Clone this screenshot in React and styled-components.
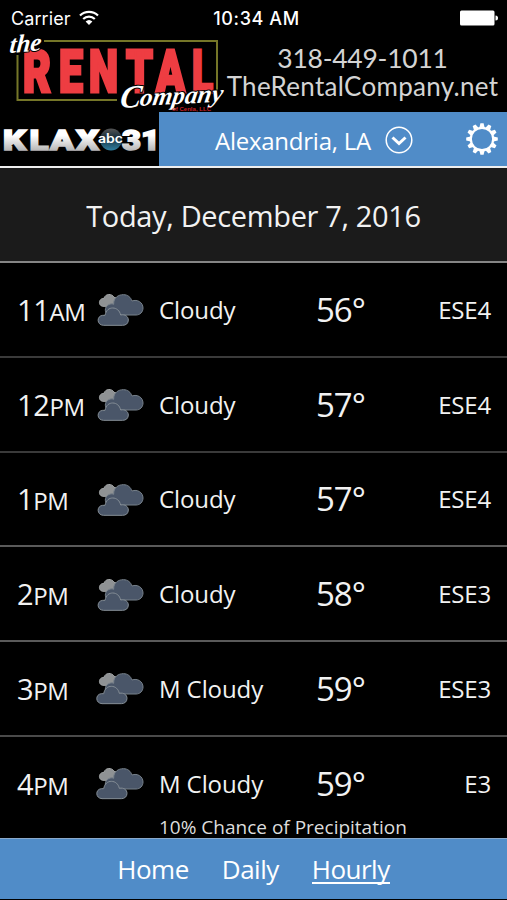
import styled, { createGlobalStyle } from "styled-components";

const hours = [
  { hour: "11", half: "AM", sky: "Cloudy", temp: 56, wind: "ESE4", line: "#3a3a3a" },
  { hour: "12", half: "PM", sky: "Cloudy", temp: 57, wind: "ESE4", line: "#3a3a3a" },
  { hour: "1", half: "PM", sky: "Cloudy", temp: 57, wind: "ESE4", line: "#5a5a5a" },
  { hour: "2", half: "PM", sky: "Cloudy", temp: 58, wind: "ESE3", line: "#5a5a5a" },
  { hour: "3", half: "PM", sky: "M Cloudy", temp: 59, wind: "ESE3", line: "#4a4a4a" },
  { hour: "4", half: "PM", sky: "M Cloudy", temp: 59, wind: "E3", rain: "10% Chance of Precipitation" },
];

const GlobalStyle = createGlobalStyle`
  * {
    box-sizing: border-box;
  }

  body {
    margin: 0;
    background: #000;
  }
`;

const Screen = styled.div`
  display: flex;
  flex-direction: column;
  width: 507px;
  height: 900px;
  overflow: hidden;
  background: #000;
  color: #f2f2f2;
  font-family: "Open Sans", "Noto Sans", sans-serif;
`;

const StatusBar = styled.div`
  display: grid;
  grid-template-columns: 1fr auto 1fr;
  align-items: center;
  flex: none;
  height: 36px;
  padding: 0 9px 0 11px;
  color: #fff;
  font-family: Inter, sans-serif;
  font-size: 18px;
`;

const Carrier = styled.div`
  display: flex;
  align-items: center;
  gap: 8px;
  letter-spacing: 0.1px;
`;

const Clock = styled.div`
  padding-left: 4px;
  font-size: 18px;
  font-weight: 500;
  letter-spacing: 0.6px;
`;

const BatteryIcon = styled.svg`
  justify-self: end;
`;

const Banner = styled.div`
  display: flex;
  flex: none;
  height: 76px;
`;

const Logo = styled.svg`
  flex: none;
  overflow: visible;
`;

const BannerText = styled.div`
  display: flex;
  flex-direction: column;
  align-items: center;
  width: 271px;
  padding-top: 8px;
  color: #d4d4d4;
  font-family: Lato, sans-serif;
  line-height: 28px;
  white-space: nowrap;
`;

const Phone = styled.span`
  font-size: 26.5px;
  letter-spacing: -0.25px;
`;

const Site = styled.span`
  font-size: 26px;
  letter-spacing: 0.3px;
`;

const Header = styled.header`
  display: flex;
  flex: none;
  height: 56px;
  border-bottom: 2px solid #eee;
`;

const Location = styled.div`
  display: flex;
  flex: 1;
  align-items: center;
  background: #508cc8;
  padding: 2px 9px 0 56px;
  color: #fff;
  font-size: 24px;
  letter-spacing: -0.25px;
`;

const Arrow = styled.svg`
  margin-left: 14px;
`;

const Gear = styled.svg`
  margin-left: auto;
  margin-bottom: 2px;
`;

const DateBar = styled.div`
  display: flex;
  align-items: center;
  justify-content: center;
  flex: none;
  height: 95px;
  padding-top: 1px;
  border-bottom: 2px solid #858585;
  background: #1b1b1b;
  font-size: 29px;
  letter-spacing: -0.35px;
`;

const List = styled.div`
  flex: none;
  height: 574.5px;
  overflow: hidden;
`;

const Row = styled.div`
  display: grid;
  grid-template-columns: 79px 63px 157px 1fr auto;
  align-items: center;
  height: 94.75px;
  padding: 0 16px 0 17px;
  border-bottom: 2px solid ${({ $line }) => $line || "transparent"};
`;

const Time = styled.div`
  font-size: 29px;
  letter-spacing: -0.4px;

  small {
    font-size: 24px;
  }
`;

const Sky = styled.div`
  font-size: 24px;
  letter-spacing: -0.1px;
`;

const Temp = styled.div`
  font-size: 33px;
  letter-spacing: -1px;
`;

const Wind = styled.div`
  font-size: 24px;
  letter-spacing: -0.2px;
`;

const Rain = styled.div`
  grid-column: 3 / -1;
  align-self: start;
  font-size: 19px;
  line-height: 24px;
  color: #ddd;
`;

const RainRow = styled(Row)`
  grid-template-rows: 93px 30px;
  height: 124px;

  ${Rain} {
    margin-top: -15px;
  }
`;

const Footer = styled.nav`
  display: flex;
  justify-content: center;
  flex: none;
  gap: 33px;
  height: 61px;
  padding-top: 12px;
  border-top: 1px solid #8aa9cb;
  background: #508cc8;
  color: #fff;
  font-size: 26px;
  letter-spacing: -0.5px;
  line-height: 37px;
`;

const Tab = styled.span`
  height: 33px;
  border-bottom: 2px solid ${({ $active }) => ($active ? "#fff" : "transparent")};
`;

const CloudIcon = ({ wide }) => (
  <svg width="48" height="34" viewBox="18 38 144 102" strokeWidth="3">
    <path
      d="M38 81C24 79 25 57 42 57C46 42 66 42 72 54C86 54 88 74 76 81z"
      fill="#8f9294"
      stroke="#a3a6a7"
    />
    <path
      d="M60 107C42 105 42 82 56 76C62 73 66 73 71 75C70 54 86 46 100 46C114 46 122 54 126 65C142 59 159 69 159 86C159 98 150 107 138 107z"
      fill="#4a5669"
      stroke="#77818b"
    />
    <path
      transform={wide ? "translate(-4 -2)" : undefined}
      d="M40 138C20 137 19 110 38 108H45C48 92 58 86 68 86C80 86 89 94 92 107C106 104 115 112 115 122C115 132 108 138 98 138z"
      fill="#4a5669"
      stroke="#858e96"
    />
  </svg>
);

const RentalLogo = () => (
  <Logo width="227" height="76" viewBox="0 36 227 76">
    <path d="M44 41H217V91M17.500 55V100H117" fill="none" stroke="#757628" strokeWidth="2" />
    <g fill="#ee3d42" stroke="#ee3d42" strokeWidth="3" fontFamily="Roboto, sans-serif" fontWeight="900" fontSize="59">
      <text x="23" y="92" textLength="28" lengthAdjust="spacingAndGlyphs">R</text>
      <text x="59" y="92" textLength="24" lengthAdjust="spacingAndGlyphs">E</text>
      <text x="89" y="92" textLength="29" lengthAdjust="spacingAndGlyphs">N</text>
      <text x="126" y="92" textLength="27" lengthAdjust="spacingAndGlyphs">T</text>
      <text x="156" y="92" textLength="29" lengthAdjust="spacingAndGlyphs">A</text>
      <text x="192" y="92" textLength="21" lengthAdjust="spacingAndGlyphs">L</text>
    </g>
    <g fill="#fff" fontFamily="Liberation Serif, serif" fontWeight="700" fontStyle="italic" stroke="#000" strokeWidth="2" paintOrder="stroke">
      <text transform="translate(9 53) rotate(-5) skewX(-10)" fontSize="25" textLength="32" lengthAdjust="spacingAndGlyphs">
        the
      </text>
      <text transform="translate(119 108) rotate(-3) skewX(-12)" fontSize="32" textLength="21" lengthAdjust="spacingAndGlyphs">
        C
      </text>
      <text transform="translate(139 106) rotate(-3) skewX(-12)" fontSize="25" textLength="83" lengthAdjust="spacingAndGlyphs">
        ompany
      </text>
    </g>
    <text x="172" y="111" fill="#c82127" fontFamily="Liberation Sans, sans-serif" fontWeight="700" fontSize="6" textLength="39">
      of Cenla, LLC
    </text>
  </Logo>
);

const StationLogo = () => (
  <Logo width="159" height="54" viewBox="0 112 159 54">
    <defs>
      <linearGradient id="steel" gradientUnits="userSpaceOnUse" x1="0" y1="129" x2="0" y2="150">
        <stop offset="0.3" stopColor="#fff" />
        <stop offset="1" stopColor="#b9b9b9" />
      </linearGradient>
      <linearGradient id="globe" x1="0" y1="0" x2="0" y2="1">
        <stop offset="0" stopColor="#555" />
        <stop offset="0.4" stopColor="#172c38" />
        <stop offset="1" stopColor="#2f7fa0" />
      </linearGradient>
    </defs>
    <g fill="url(#steel)" stroke="url(#steel)" strokeWidth="1.500" fontFamily="Roboto, sans-serif" fontWeight="900" fontSize="27.500">
      <text x="3" y="149.500" textLength="23" lengthAdjust="spacingAndGlyphs">K</text>
      <text x="29.500" y="149.500" textLength="19" lengthAdjust="spacingAndGlyphs">L</text>
      <text x="50" y="149.500" textLength="24" lengthAdjust="spacingAndGlyphs">A</text>
      <text x="76" y="149.500" textLength="23" lengthAdjust="spacingAndGlyphs">X</text>
      <text x="122" y="149.500" textLength="38" lengthAdjust="spacingAndGlyphs">31</text>
    </g>
    <circle cx="111" cy="139.500" r="11" fill="url(#globe)" />
    <text x="98" y="143" fill="#fff" fontFamily="Inter, sans-serif" fontWeight="600" fontSize="12.500" textLength="25" lengthAdjust="spacingAndGlyphs">
      abc
    </text>
  </Logo>
);

const teeth = [0, 30, 60, 90, 120, 150, 180, 210, 240, 270, 300, 330];

const App = () => {
  return (
    <Screen>
      <GlobalStyle />
      <StatusBar>
        <Carrier>
          Carrier
          <svg width="20" height="16" viewBox="0 0 20 16">
            <g fill="none" stroke="#fff" strokeWidth="2.200">
              <path d="M1 5.500a13 13 0 0 1 18 0" />
              <path d="M4.200 9a8.300 8.300 0 0 1 11.600 0" />
            </g>
            <path d="M10 15L6.600 11.600a5 5 0 0 1 6.800 0z" fill="#fff" />
          </svg>
        </Carrier>
        <Clock>10:34 AM</Clock>
        <BatteryIcon width="38" height="16" viewBox="0 0 38 16">
          <rect x="0" y="0.500" width="34.500" height="15" rx="1.500" fill="#fff" />
          <path d="M35.500 5.500a2.500 2.500 0 0 1 0 5z" fill="#fff" />
        </BatteryIcon>
      </StatusBar>

      <Banner>
        <RentalLogo />
        <BannerText>
          <Phone>318-449-1011</Phone>
          <Site>TheRentalCompany.net</Site>
        </BannerText>
      </Banner>

      <Header>
        <StationLogo />
        <Location>
          Alexandria, LA
          <Arrow width="28" height="28" viewBox="0 0 28 28" fill="none" stroke="#fff">
            <circle cx="14" cy="14" r="12.800" strokeWidth="1.500" />
            <path d="M7.500 11.500L14 17.500L20.500 11.500" strokeWidth="3" />
          </Arrow>
          <Gear width="32" height="32" viewBox="-16 -16 32 32">
            <circle r="11.200" fill="none" stroke="#fff" strokeWidth="2.200" />
            {teeth.map((angle) => (
              <path key={angle} d="M-2.600 -11.500L-1.600 -15.800H1.600L2.600 -11.500z" fill="#fff" transform={`rotate(${angle})`} />
            ))}
          </Gear>
        </Location>
      </Header>

      <DateBar>Today, December 7, 2016</DateBar>

      <List>
        {hours.map((item) => {
          const HourRow = item.rain ? RainRow : Row;
          return (
            <HourRow key={item.hour} $line={item.line}>
              <Time>
                {item.hour}
                <small>{item.half}</small>
              </Time>
              <CloudIcon wide={item.sky === "M Cloudy"} />
              <Sky>{item.sky}</Sky>
              <Temp>{item.temp}°</Temp>
              <Wind>{item.wind}</Wind>
              {item.rain ? <Rain>{item.rain}</Rain> : null}
            </HourRow>
          );
        })}
      </List>

      <Footer>
        <Tab>Home</Tab>
        <Tab>Daily</Tab>
        <Tab $active>Hourly</Tab>
      </Footer>
    </Screen>
  );
};

export default App;
